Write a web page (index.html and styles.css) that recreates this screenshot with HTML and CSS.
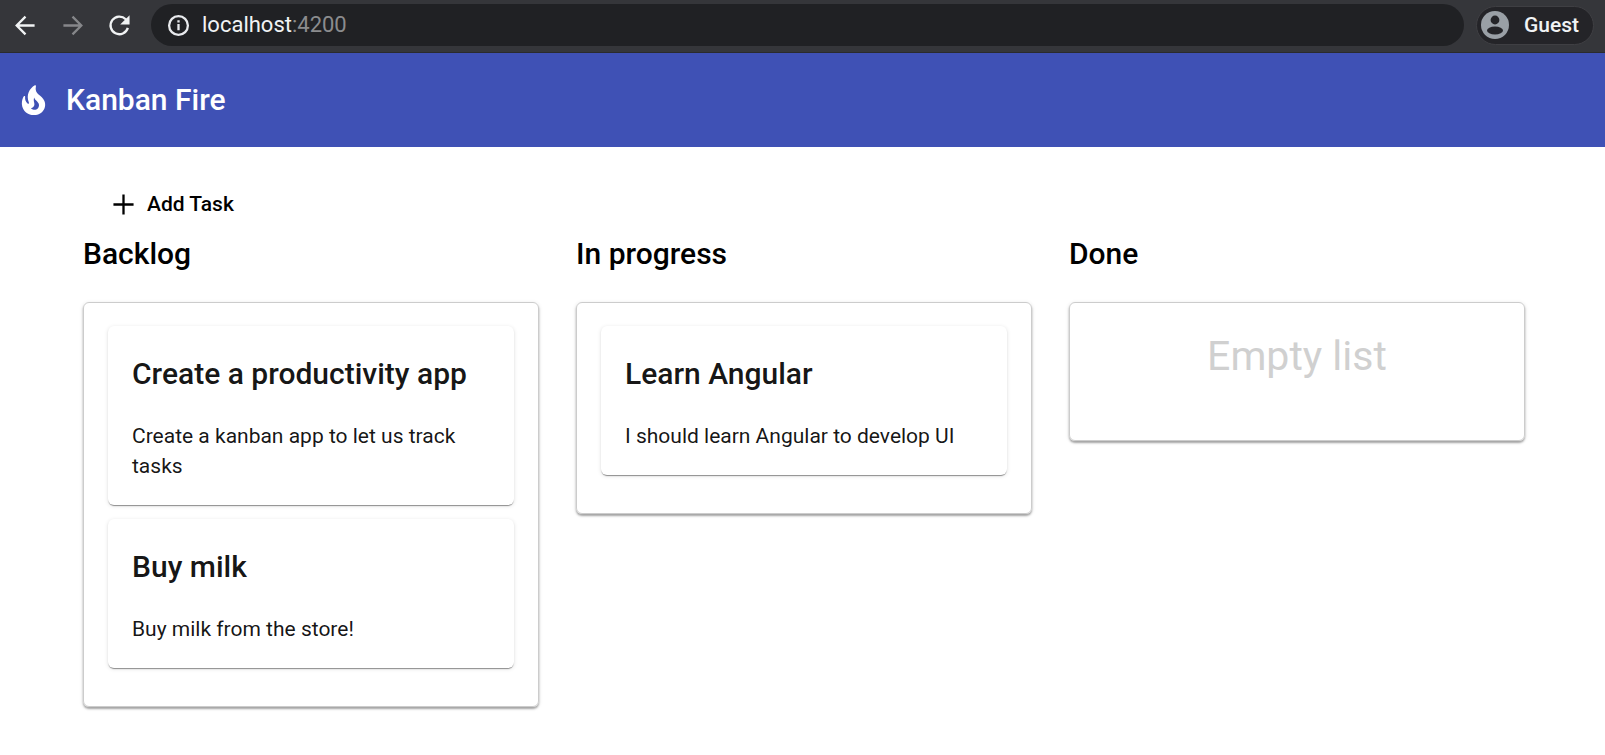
FILE: index.html
```html
<!DOCTYPE html>
<html lang="en">
<head>
<meta charset="utf-8">
<title>Kanban Fire</title>
<link rel="stylesheet" href="styles.css">
</head>
<body>
<header class="browser">
  <nav class="browser-nav">
    <button class="nav-button" aria-label="Back"><svg viewBox="0 0 24 24"><path d="M21.500 12H3.500M12 2.800 2.800 12l9.200 9.200"/></svg></button>
    <button class="nav-button nav-button-off" aria-label="Forward" disabled><svg viewBox="0 0 24 24"><path d="M2.500 12h18M12 2.800l9.200 9.200-9.200 9.200"/></svg></button>
    <button class="nav-button" aria-label="Reload"><svg viewBox="0 0 24 24"><path d="M20.700 14.500A9.200 9.200 0 1 1 18.500 5.500L20 7.200"/><path class="solid" d="M22.500 1.200v9.800h-9.800z"/></svg></button>
  </nav>
  <div class="address">
    <svg class="info" viewBox="0 0 24 24" aria-hidden="true"><circle cx="12" cy="12" r="9.800"/><path d="M12 10.500v6.500M12 6.600v2.200"/></svg>
    <span>localhost<span class="port">:4200</span></span>
  </div>
  <button class="profile">
    <svg viewBox="0 0 28 28" aria-hidden="true"><circle class="disc" cx="14" cy="14" r="14"/><circle cx="14" cy="9" r="4.400"/><ellipse cx="14" cy="19.500" rx="8" ry="4"/></svg>
    Guest
  </button>
</header>
<div class="toolbar">
  <svg class="flame" viewBox="0 0 24 24" aria-hidden="true"><path d="M19.480 12.350c-1.570-4.080-7.160-4.300-5.810-10.230.100-.440-.370-.780-.750-.550C9.290 3.710 6.680 8 8.870 13.620c.180.460-.360.890-.750.590-1.810-1.370-2-3.340-1.840-4.750.060-.520-.620-.770-.910-.340C4.690 10.160 4 11.840 4 14.370c.380 5.600 5.110 7.320 6.810 7.540 2.430.310 5.060-.140 6.950-1.870 2.080-1.930 2.840-5.010 1.720-7.690zM10.200 17.380c1.440-.350 2.180-1.390 2.380-2.310.330-1.430-.960-2.830-.090-5.090.330 1.870 3.270 3.040 3.270 5.080.080 2.530-2.660 4.700-5.560 2.320z"/></svg>
  <h1 class="brand">Kanban Fire</h1>
</div>
<main class="content">
  <button class="add-task"><svg viewBox="0 0 24 24" aria-hidden="true"><path d="M12 1.500v21M1.500 12h21"/></svg>Add Task</button>
  <div class="board">
    <section class="column">
      <h2 class="heading">Backlog</h2>
      <div class="list">
        <article class="card"><h3 class="heading">Create a productivity app</h3><p>Create a kanban app to let us track tasks</p></article>
        <article class="card"><h3 class="heading">Buy milk</h3><p>Buy milk from the store!</p></article>
      </div>
    </section>
    <section class="column">
      <h2 class="heading">In progress</h2>
      <div class="list">
        <article class="card"><h3 class="heading">Learn Angular</h3><p>I should learn Angular to develop UI</p></article>
      </div>
    </section>
    <section class="column">
      <h2 class="heading">Done</h2>
      <div class="list"><p class="empty">Empty list</p></div>
    </section>
  </div>
</main>
</body>
</html>
```
FILE: styles.css
```css
* { box-sizing: border-box; }
body {
  margin: 0;
  background: #fff;
  color: #000;
  font: 400 21px/30px Roboto, sans-serif;
}
h1, h2, h3, p { margin: 0; }
button {
  padding: 0;
  border: 0;
  background: none;
  color: inherit;
  font: inherit;
}
svg { display: block; flex: none; }

.browser {
  display: flex;
  align-items: center;
  gap: 12px;
  height: 53px;
  padding: 0 11px 2px 14px;
  border-bottom: 1px solid #2a2b2d;
  background: #35363a;
  color: #f1f3f4;
}
.browser-nav { display: flex; gap: 24px; margin-right: 8px; }
.nav-button svg { width: 23px; height: 23px; fill: none; stroke: #f1f3f4; stroke-width: 2.4; }
.nav-button .solid { fill: #f1f3f4; stroke: none; }
.nav-button-off svg { stroke: #86878a; }
.address {
  display: flex;
  flex: 1;
  align-items: center;
  gap: 12px;
  height: 42px;
  padding: 0 16px;
  border-radius: 21px;
  background: #202124;
  font-size: 22px;
}
.info { width: 23px; height: 23px; fill: none; stroke: #e8eaed; stroke-width: 2.4; }
.port { color: #8b8c8e; }
.profile {
  display: flex;
  align-items: center;
  gap: 15px;
  height: 39px;
  padding: 0 14px 0 4px;
  border: 1px solid #3f3f43;
  border-radius: 20px;
  background: #242428;
  font-weight: 500;
}
.profile svg { width: 28px; height: 28px; fill: #242428; }
.profile .disc { fill: #9aa0a6; }

.toolbar {
  display: flex;
  align-items: center;
  gap: 15px;
  height: 94px;
  padding: 0 16px;
  background: #3f51b5;
  color: #fff;
}
.flame { width: 35px; height: 35px; fill: #fff; }
.brand, .heading { font-size: 30px; font-weight: 500; }

.content { padding: 35px 80px 40px 83px; }
.add-task {
  display: flex;
  align-items: center;
  gap: 12px;
  height: 44px;
  margin-left: 29px;
  font-weight: 500;
}
.add-task svg { width: 23px; height: 23px; fill: none; stroke: #000; stroke-width: 2.4; }
.board {
  display: grid;
  grid-template-columns: repeat(3, 1fr);
  gap: 37px;
  align-items: start;
}
.column { display: grid; gap: 20px; }
.column > .heading { line-height: 56px; }
.list {
  display: grid;
  gap: 14px;
  min-height: 139px;
  padding: 23px 24px 38px;
  border: 1px solid #ccc;
  border-radius: 6px;
  box-shadow: 0 2px 2px rgba(0, 0, 0, .3), 0 1px 4px rgba(0, 0, 0, .12);
}
.card {
  padding: 24px;
  border-radius: 6px;
  background: #fff;
  box-shadow: 0 2px 1px -1px rgba(0, 0, 0, .3), 0 1px 1px rgba(0, 0, 0, .14), 0 1px 4px rgba(0, 0, 0, .12);
  color: rgba(0, 0, 0, .92);
}
.card .heading { margin-bottom: 23px; line-height: 48px; }
.empty {
  color: #d0d0d0;
  font-size: 41px;
  line-height: 60px;
  text-align: center;
}
```
